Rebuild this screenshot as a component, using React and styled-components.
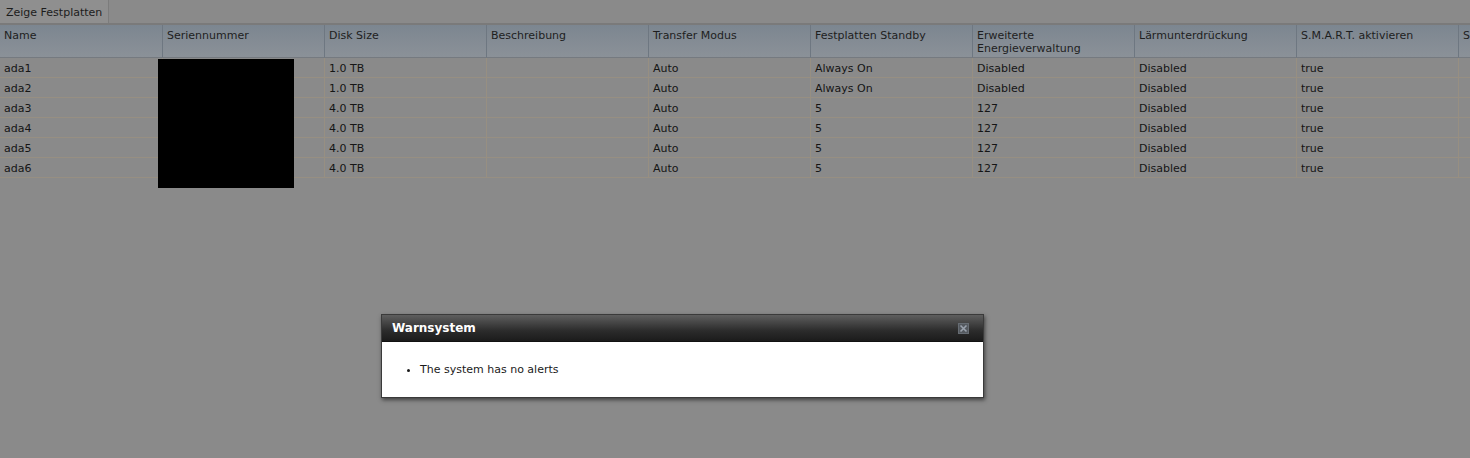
import React from 'react';
import styled, { createGlobalStyle } from 'styled-components';

const GlobalStyle = createGlobalStyle`
  html, body {
    margin: 0;
    padding: 0;
    background: #8a8a8a;
    overflow: hidden;
  }
  body {
    font-family: Verdana, "DejaVu Sans", sans-serif;
    font-size: 11px;
    color: #1a1a1a;
  }
`;

const Page = styled.div`
  position: relative;
  width: 1470px;
  height: 458px;
  overflow: hidden;
`;

const TabBar = styled.div`
  display: flex;
  height: 23px;
  border-bottom: 2px solid #7a7a7a;
`;

const Tab = styled.div`
  display: flex;
  align-items: center;
  padding: 1px 6px 0;
  background: #8f8f8f;
  border-right: 1px solid #7c7c7c;
  font-size: 11px;
  color: #1c1c1c;
`;

const Table = styled.div`
  display: grid;
  grid-template-columns: repeat(10, 162px);
  width: 1620px;
`;

const HeadCell = styled.div`
  height: 33px;
  padding: 4px 4px 0;
  box-sizing: border-box;
  background: linear-gradient(to bottom, #7c8690, #8b9198);
  border-left: ${(p) => (p.$first ? 'none' : '1px solid #6e7781')};
  border-bottom: 1px solid #757a80;
  line-height: 13px;
  color: #1e1e1e;
  white-space: nowrap;
  overflow: hidden;
`;

const Cell = styled.div`
  height: 20px;
  padding: 1px 4px 0;
  box-sizing: border-box;
  display: flex;
  align-items: center;
  border-left: ${(p) => (p.$first ? 'none' : '1px solid #978f82')};
  border-bottom: 1px solid #978f82;
  color: #151515;
  white-space: nowrap;
`;

const Redaction = styled.div`
  position: absolute;
  left: 158px;
  top: 59px;
  width: 136px;
  height: 129px;
  background: #000;
`;

const Dialog = styled.div`
  position: absolute;
  left: 381px;
  top: 314px;
  width: 601px;
  border: 1px solid #3a3a3a;
  box-shadow: 1px 2px 4px rgba(0, 0, 0, 0.55);
  background: #fff;
`;

const TitleBar = styled.div`
  display: flex;
  align-items: center;
  justify-content: space-between;
  height: 26px;
  padding: 0 14px 0 10px;
  background: linear-gradient(to bottom, #5e5e5e, #2c2c2c 60%, #1b1b1b);
  border-bottom: 1px solid #111;
`;

const Title = styled.span`
  font-family: Verdana, "DejaVu Sans", sans-serif;
  font-weight: bold;
  font-size: 12px;
  color: #fff;
`;

const CloseIcon = styled.svg`
  display: block;
`;

const Body = styled.div`
  height: 55px;
  display: flex;
  align-items: center;
`;

const Alerts = styled.ul`
  margin: 0;
  padding-left: 38px;
  font-size: 11px;
  color: #1a1a1a;
`;

const headers = [
  'Name',
  'Seriennummer',
  'Disk Size',
  'Beschreibung',
  'Transfer Modus',
  'Festplatten Standby',
  'Erweiterte Energieverwaltung',
  'Lärmunterdrückung',
  'S.M.A.R.T. aktivieren',
  'S.M.A.R.T. extra options',
];

const disks = [
  ['ada1', '', '1.0 TB', '', 'Auto', 'Always On', 'Disabled', 'Disabled', 'true', ''],
  ['ada2', '', '1.0 TB', '', 'Auto', 'Always On', 'Disabled', 'Disabled', 'true', ''],
  ['ada3', '', '4.0 TB', '', 'Auto', '5', '127', 'Disabled', 'true', ''],
  ['ada4', '', '4.0 TB', '', 'Auto', '5', '127', 'Disabled', 'true', ''],
  ['ada5', '', '4.0 TB', '', 'Auto', '5', '127', 'Disabled', 'true', ''],
  ['ada6', '', '4.0 TB', '', 'Auto', '5', '127', 'Disabled', 'true', ''],
];

function App() {
  return (
    <>
      <GlobalStyle />
      <Page>
        <TabBar>
          <Tab>Zeige Festplatten</Tab>
        </TabBar>
        <Table>
          {headers.map((h, i) => (
            <HeadCell key={h} $first={i === 0}>
              {h === 'Erweiterte Energieverwaltung' ? (
                <>
                  Erweiterte
                  <br />
                  Energieverwaltung
                </>
              ) : (
                h
              )}
            </HeadCell>
          ))}
          {disks.map((row) =>
            row.map((v, i) => (
              <Cell key={`${row[0]}-${i}`} $first={i === 0}>
                {v}
              </Cell>
            )),
          )}
        </Table>
        <Redaction />
        <Dialog>
          <TitleBar>
            <Title>Warnsystem</Title>
            <CloseIcon width="11" height="11" viewBox="0 0 11 11">
              <rect x="0.5" y="0.5" width="10" height="10" fill="#54595f" stroke="#666c73" />
              <path d="M2.5 2.5 L8.5 8.5 M8.5 2.5 L2.5 8.5" stroke="#9aa2ad" strokeWidth="1.6" />
            </CloseIcon>
          </TitleBar>
          <Body>
            <Alerts>
              <li>The system has no alerts</li>
            </Alerts>
          </Body>
        </Dialog>
      </Page>
    </>
  );
}

export default App;
